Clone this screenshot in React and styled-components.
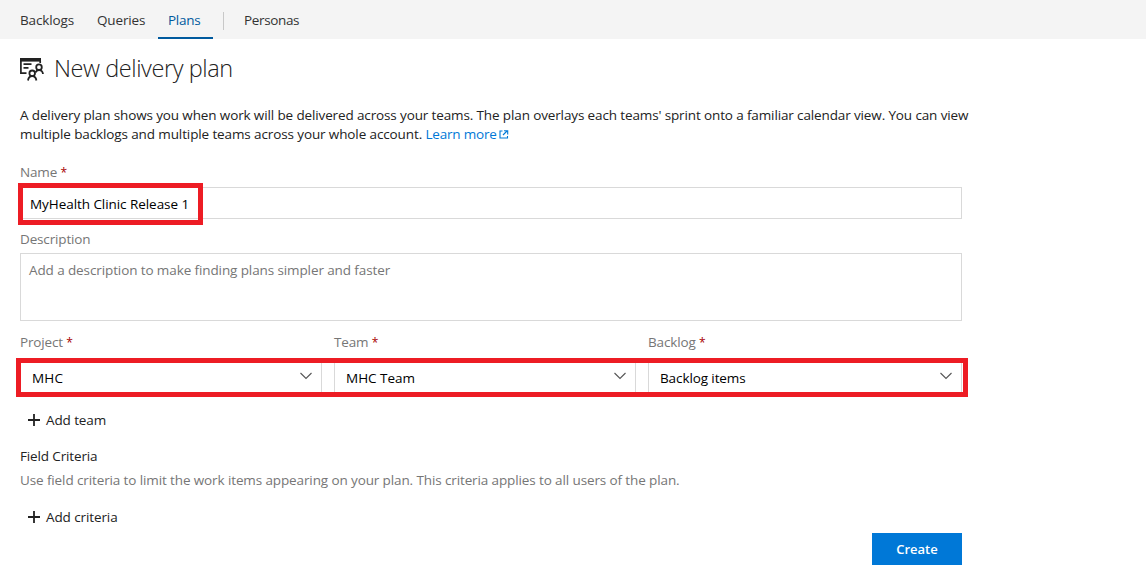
import React from "react";
import styled, { createGlobalStyle } from "styled-components";

const GlobalStyle = createGlobalStyle`
  * { box-sizing: border-box; }
  body {
    margin: 0;
    background: #fff;
    color: #222;
    font: 13.5px/19px "Segoe UI", "Open Sans", "Noto Sans", sans-serif;
  }
`;

const Spaced = styled.span`
  white-space: nowrap;
  letter-spacing: ${(p) => p.$track || 0}px;
`;

const TabBar = styled.nav`
  display: flex;
  height: 39px;
  padding-left: 10px;
  background: #f4f4f4;
`;

const Tab = styled.a`
  width: ${(p) => p.$width}px;
  height: 39px;
  padding: 11px 0 0 10px;
  color: ${(p) => (p.$active ? "#005a9e" : "#333")};
  border-bottom: 2px solid ${(p) => (p.$active ? "#005a9e" : "transparent")};
`;

const TabDivider = styled.span`
  width: 1px;
  height: 18px;
  margin: 12px 10px 0;
  background: #c8c8c8;
`;

const Page = styled.main`
  width: 982px;
  padding: 0 20px;
`;

const Heading = styled.header`
  display: flex;
  align-items: flex-start;
  gap: 10px;
  height: 60px;
  padding-top: 13px;
  svg { margin-top: 6px; }
`;

const Title = styled.h1`
  margin: 0;
  font-size: 23.5px;
  line-height: 32px;
  font-weight: 300;
  letter-spacing: -0.42px;
  white-space: nowrap;
`;

const Intro = styled.p`
  width: 960px;
  height: 38px;
  margin: 7px 0 19px;
`;

const Link = styled.a`
  color: #0078d7;
  letter-spacing: -0.2px;
  svg { margin-left: 2px; }
`;

const Label = styled.label`
  display: block;
  height: 19px;
  color: #767676;
  letter-spacing: -0.15px;
`;

const Required = styled.span`
  color: #a80000;
  font-size: 12px;
`;

const NameField = styled.div`
  position: relative;
  height: 32px;
  margin: 5px 0 11px;
  padding: 7px 9px;
  border: 1px solid #d9d9d9;
  color: #000;
`;

const Description = styled.div`
  height: 68px;
  margin: 4px 0 12px;
  padding: 7px 8px;
  border: 1px solid #d9d9d9;
  color: #767676;
`;

const Highlight = styled.div`
  position: absolute;
  top: ${(p) => p.$top}px;
  left: ${(p) => p.$left}px;
  width: ${(p) => p.$width}px;
  height: ${(p) => p.$height}px;
  border: 5px solid #ed1c24;
  pointer-events: none;
`;

const Selectors = styled.div`
  position: relative;
  display: grid;
  grid-template-columns: 302px 302px 314px;
  column-gap: 12px;
`;

const Select = styled.div`
  display: flex;
  justify-content: space-between;
  height: 32px;
  margin-top: 10px;
  padding: 6px 9px 0 11px;
  border: 1px solid #d9d9d9;
  color: #000;
  svg { margin-top: 3px; }
`;

const AddAction = styled.div`
  display: flex;
  align-items: center;
  gap: 6px;
  height: 20px;
  margin: ${(p) => p.$top}px 0 0 8px;
`;

const Criteria = styled.section`
  margin-top: 17px;
`;

const Hint = styled.p`
  margin: 5px 0 0;
  color: #767676;
`;

const Actions = styled.footer`
  display: flex;
  justify-content: flex-end;
  margin-top: 6px;
`;

const CreateButton = styled.button`
  width: 90px;
  height: 32px;
  padding: 0;
  border: 0;
  background: #0078d7;
  color: #fff;
  font: inherit;
  font-size: 13px;
  font-weight: 600;
`;

const PlanIcon = () => (
  <svg width="24" height="24" viewBox="0 0 24 24" fill="none" stroke="#222">
    <path d="M0 0h21v3.6H0z" fill="#222" stroke="none" />
    <path d="M.9 3v12.2h5.6M20.2 3v2M3.5 6.2h8M3.5 9.8h5" strokeWidth="1.7" />
    <circle cx="19" cy="9.2" r="2.8" strokeWidth="1.8" />
    <path d="M15.6 14.6c.5-1.6 1.8-2.5 3.4-2.5 2.3 0 3.7 1.4 4 3.9" strokeWidth="1.8" />
    <circle cx="12.2" cy="15.3" r="2.8" strokeWidth="1.8" />
    <path d="M8 22.5c.4-2.8 1.9-4.3 4.2-4.3s3.8 1.5 4.2 4.3" strokeWidth="1.8" />
  </svg>
);

const ExternalIcon = () => (
  <svg width="10" height="9" viewBox="0 0 10 9" fill="none" stroke="#0078d7">
    <path d="M3.5 1H1v7h7.5V6M4 5l4-4M5 .8h3.7v3.7" strokeWidth="1.1" />
  </svg>
);

const Chevron = () => (
  <svg width="12" height="8" viewBox="0 0 12 8" fill="none" stroke="#555">
    <path d="M.5 1 6 6.5 11.5 1" strokeWidth="1.1" />
  </svg>
);

const Plus = () => (
  <svg width="12" height="12" viewBox="0 0 12 12" stroke="#222">
    <path d="M6 0v12M0 6h12" strokeWidth="1.8" />
  </svg>
);

const fields = [
  { label: "Project", value: "MHC", track: 0.2 },
  { label: "Team", value: "MHC Team", track: 0 },
  { label: "Backlog", value: "Backlog items", track: -0.1 },
];

export default function App() {
  return (
    <>
      <GlobalStyle />
      <TabBar>
        <Tab $width={77}><Spaced $track={-0.12}>Backlogs</Spaced></Tab>
        <Tab $width={71}><Spaced $track={-0.15}>Queries</Spaced></Tab>
        <Tab $width={55} $active><Spaced $track={-0.25}>Plans</Spaced></Tab>
        <TabDivider />
        <Tab $width={76}><Spaced $track={-0.35}>Personas</Spaced></Tab>
      </TabBar>
      <Page>
        <Heading>
          <PlanIcon />
          <Title>New delivery plan</Title>
        </Heading>
        <Intro>
          <Spaced $track={-0.128}>A delivery plan shows you when work will be delivered across your teams. The plan overlays each teams' sprint onto a familiar calendar view. You can view</Spaced>
          <br />
          <Spaced $track={-0.115}>multiple backlogs and multiple teams across your whole account. <Link>Learn more<ExternalIcon /></Link></Spaced>
        </Intro>
        <Label>Name <Required>*</Required></Label>
        <NameField>
          <Spaced $track={-0.06}>MyHealth Clinic Release 1</Spaced>
          <Highlight $top={-5} $left={-3} $width={185} $height={42} />
        </NameField>
        <Label>Description</Label>
        <Description><Spaced $track={-0.105}>Add a description to make finding plans simpler and faster</Spaced></Description>
        <Selectors>
          {fields.map((f) => (
            <div key={f.label}>
              <Label>{f.label} <Required>*</Required></Label>
              <Select>
                <Spaced $track={f.track}>{f.value}</Spaced>
                <Chevron />
              </Select>
            </div>
          ))}
          <Highlight $top={25} $left={-4} $width={952} $height={39} />
        </Selectors>
        <AddAction $top={16}><Plus /><Spaced $track={-0.1}>Add team</Spaced></AddAction>
        <Criteria>
          <Spaced $track={-0.14}>Field Criteria</Spaced>
          <Hint><Spaced $track={-0.115}>Use field criteria to limit the work items appearing on your plan. This criteria applies to all users of the plan.</Spaced></Hint>
        </Criteria>
        <AddAction $top={17}><Plus /><Spaced $track={-0.1}>Add criteria</Spaced></AddAction>
        <Actions><CreateButton>Create</CreateButton></Actions>
      </Page>
    </>
  );
}
